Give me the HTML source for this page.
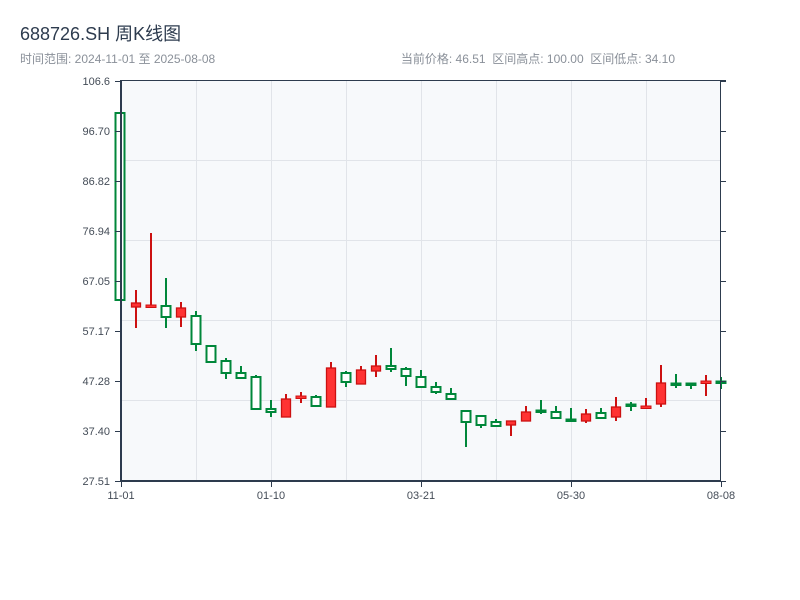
<!DOCTYPE html>
<html><head><meta charset="utf-8"><style>
body{margin:0;width:800px;height:600px;background:#fff;overflow:hidden;font-family:"Liberation Sans","Noto Sans CJK SC",sans-serif}
</style></head><body>
<svg id="s" width="800" height="600" xmlns="http://www.w3.org/2000/svg" style="position:absolute;left:0;top:0">
<text x="20" y="40" font-size="18" fill="#2d3b4e" font-family="Liberation Sans, Noto Sans CJK SC, sans-serif">688726.SH 周K线图</text>
<text x="20" y="63" font-size="12" fill="#8a9099" font-family="Liberation Sans, Noto Sans CJK SC, sans-serif">时间范围: 2024-11-01 至 2025-08-08</text>
<text x="675" y="63" font-size="12" fill="#8a9099" text-anchor="end" style="white-space:pre" font-family="Liberation Sans, Noto Sans CJK SC, sans-serif">当前价格: 46.51  区间高点: 100.00  区间低点: 34.10</text>
<rect x="121" y="80" width="599" height="401" fill="#f7f9fb"/>
<g id="grid" stroke="#e1e4e9" stroke-width="1"></g>
<g id="c"></g>
<g stroke="#2d3b4e" stroke-width="2" fill="none">
<line x1="121" y1="80" x2="121" y2="482"/>
<line x1="120" y1="481" x2="721" y2="481"/>
</g>
<g stroke="#2d3b4e" stroke-width="1" fill="none">
<line x1="121" y1="80.5" x2="726" y2="80.5"/>
<line x1="720.5" y1="80" x2="720.5" y2="481"/>
</g>
<g id="ax" font-size="11" fill="#444c57" font-family="Liberation Sans, sans-serif"></g>
</svg>
<script>
var NS="http://www.w3.org/2000/svg";
function el(p,t,a,txt){var e=document.createElementNS(NS,t);for(var k in a)e.setAttribute(k,a[k]);if(txt)e.textContent=txt;document.getElementById(p).appendChild(e);}
[196,271,346,421,496,571,646].forEach(function(x){el("grid","line",{x1:x+.5,y1:81,x2:x+.5,y2:480});});
[160,240,320,400].forEach(function(y){el("grid","line",{x1:122,y1:y+.5,x2:720,y2:y+.5});});
var yl=["106.6","96.70","86.82","76.94","67.05","57.17","47.28","37.40","27.51"];
yl.forEach(function(t,i){var y=81+50*i;el("ax","text",{x:110,y:y+4,"text-anchor":"end"},t);
el("ax","line",{x1:115,y1:y+.5,x2:121,y2:y+.5,stroke:"#2d3b4e"});el("ax","line",{x1:720,y1:y+.5,x2:726,y2:y+.5,stroke:"#2d3b4e"});});
[["11-01",121],["01-10",271],["03-21",421],["05-30",571],["08-08",721]].forEach(function(a){
el("ax","text",{x:a[1],y:499,"text-anchor":"middle"},a[0]);el("ax","line",{x1:a[1]+.5,y1:481,x2:a[1]+.5,y2:487,stroke:"#2d3b4e"});});
var d=[[113,300,113,300,0],[290,328,303,307,1],[233,307,305,307,1],[278,328,306,317,0],[302,327,308,317,1],
[311,351,316,344,0],[346,362,346,362,0],[358,379,361,373,0],[366,379,373,378,0],[375,409,377,409,0],
[400,417,409,412,0],[394,417,399,417,1],[392,403,396,398,1],[395,406,397,406,0],[362,407,368,407,1],
[371,387,373,382,0],[366,384,370,384,1],[355,377,366,371,1],[348,372,366,369,0],[367,386,369,376,0],
[370,387,377,387,0],[382,394,387,392,0],[388,399,394,399,0],[411,447,411,422,0],[416,428,416,425,0],
[419,427,422,426,0],[421,436,421,425,1],[406,421,412,421,1],[400,414,410,412,0],[406,419,412,418,0],
[408,421,419,421,0],[409,423,414,421,1],[408,418,413,418,0],[397,421,407,417,1],[402,411,404,406,0],
[398,408,406,408,1],[365,407,383,404,1],[374,388,383,385,0],[383,389,383,385,0],[375,396,381,383,1],[377,389,381,383,0]];
d.forEach(function(c,i){var x=i==0?120:121+15*i;var up=c[4];var col=up?"#cc1111":"#00873a";
el("c","line",{x1:x,y1:c[0],x2:x,y2:c[1],stroke:col,"stroke-width":2});
var h=c[3]-c[2];if(h<3){el("c","rect",{x:x-5,y:c[2],width:10,height:Math.max(h,2.5),fill:up?"#ff3333":col,stroke:col,"stroke-width":1});}
else el("c","rect",{x:x-4.5,y:c[2],width:9,height:h,fill:up?"#ff3333":"#fff",stroke:col,"stroke-width":up?1.3:2});});
</script>
</body></html>
